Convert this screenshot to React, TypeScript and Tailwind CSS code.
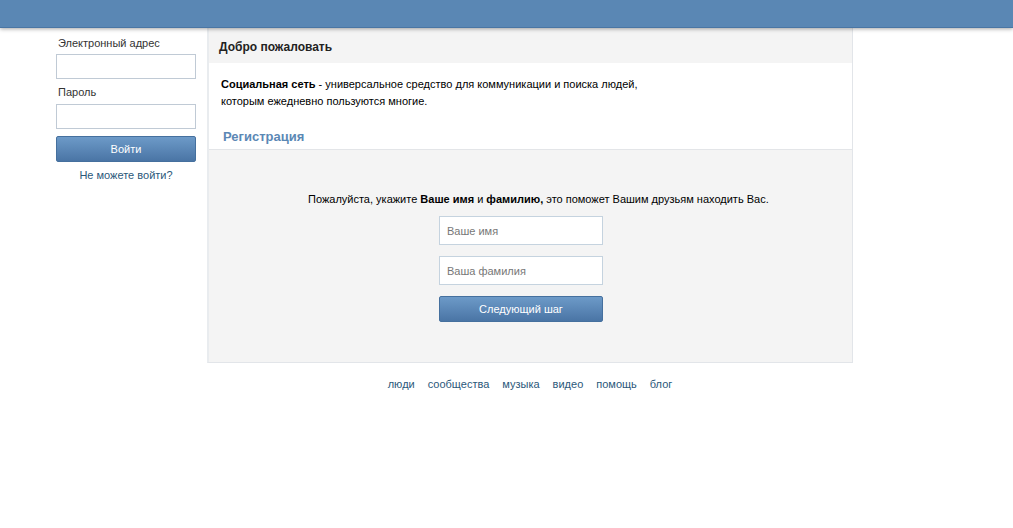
export default function App() {
  const links = ['люди', 'сообщества', 'музыка', 'видео', 'помощь', 'блог'];
  return (
    <div className="min-h-screen bg-white text-[11px] text-[#222]" style={{ fontFamily: '"Liberation Sans", Tahoma, Arial, sans-serif' }}>
      {/* Header */}
      <header className="h-[28px] bg-[#5a87b4] border-b border-[#4a76a4] shadow-[0_1px_4px_rgba(0,0,0,0.35)] relative z-10" />

      <div className="flex items-start ml-[56px]">
        {/* Login column */}
        <div className="w-[140px] pt-[8px] flex flex-col">
          <label className="text-[11px] text-[#333] leading-[14px] mb-[4px] pl-[2px]">Электронный адрес</label>
          <input className="h-[25px] w-[140px] border border-[#c0cad5] bg-white outline-none px-2" />
          <label className="text-[11px] text-[#333] leading-[14px] mt-[6px] mb-[5px] pl-[2px]">Пароль</label>
          <input type="password" className="h-[25px] w-[140px] border border-[#c0cad5] bg-white outline-none px-2" />
          <button className="mt-[7px] h-[26px] w-[140px] rounded-[2px] border border-[#45709e] bg-gradient-to-b from-[#6d9ac8] to-[#4a75a5] text-white text-[11px]">
            Войти
          </button>
          <a className="mt-[5px] text-center text-[11px] text-[#2b587a] cursor-pointer">Не можете войти?</a>
        </div>

        {/* Main panel */}
        <div className="ml-[11px] w-[646px] flex flex-col">
          <div className="border-x border-b border-[#e2e5e9] border-l-2 border-l-[#e9ecef]">
            <div className="h-[35px] bg-[#f4f4f4] flex items-center pt-[2px] pl-[10px] font-bold text-[12px] text-[#222]">
              Добро пожаловать
            </div>
            <div className="bg-white px-[12px] pt-[13px] text-[11px] leading-[17px] text-[#000]">
              <p>
                <b>Социальная сеть</b> - универсальное средство для коммуникации и поиска людей,
                <br />
                которым ежедневно пользуются многие.
              </p>
              <div className="mt-[18px] pb-[4px] pl-[2px] font-bold text-[13px] text-[#5b88b5]">Регистрация</div>
            </div>
            <div className="border-t border-[#e3e5e8] bg-[#f4f4f4] pt-[42px] pb-[40px] flex flex-col items-start">
              <p className="ml-[99px] text-[11px] text-[#000] leading-[14px]">
                Пожалуйста, укажите <b>Ваше имя</b> и <b>фамилию,</b> это поможет Вашим друзьям находить Вас.
              </p>
              <div className="ml-[230px] flex flex-col">
                <input
                  placeholder="Ваше имя"
                  className="mt-[10px] h-[29px] w-[164px] border border-[#c5d3df] bg-white outline-none px-[7px] text-[11px] placeholder:text-[#777]"
                />
                <input
                  placeholder="Ваша фамилия"
                  className="mt-[11px] h-[29px] w-[164px] border border-[#c5d3df] bg-white outline-none px-[7px] text-[11px] placeholder:text-[#777]"
                />
                <button className="mt-[11px] h-[26px] w-[164px] rounded-[2px] border border-[#45709e] bg-gradient-to-b from-[#6d9ac8] to-[#4a75a5] text-white text-[11px]">
                  Следующий шаг
                </button>
              </div>
            </div>
          </div>

          {/* Footer */}
          <div className="mt-[13px] flex justify-center gap-[13px] text-[11px] text-[#2b587a]">
            {links.map((l) => (
              <a key={l} className="cursor-pointer">{l}</a>
            ))}
          </div>
        </div>
      </div>
    </div>
  );
}
